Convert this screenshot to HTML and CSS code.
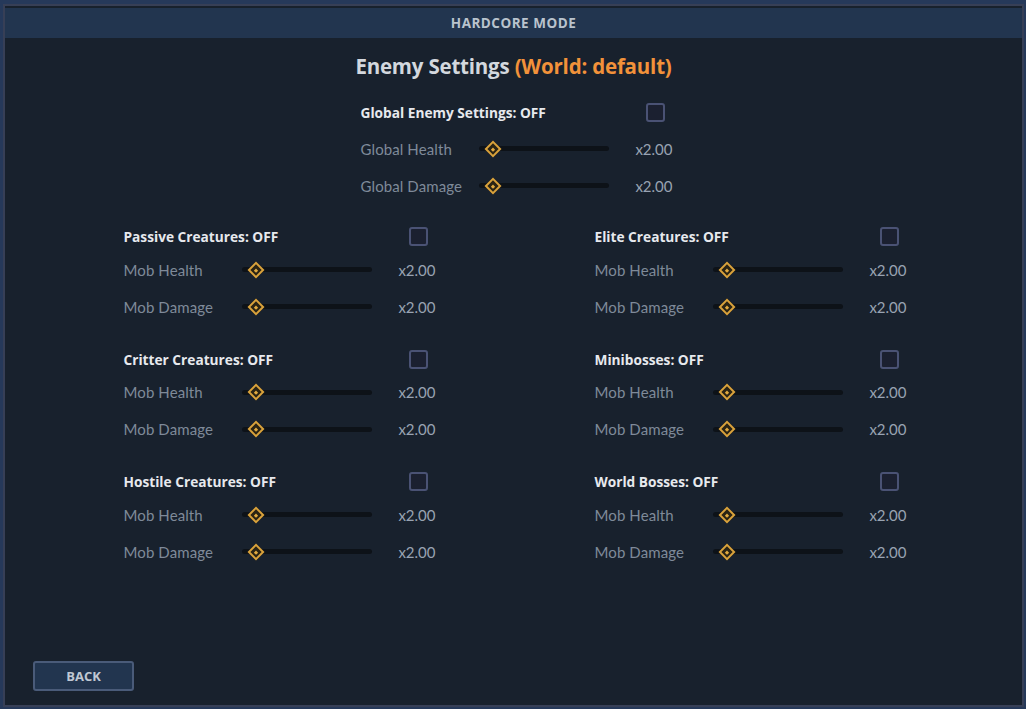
FILE: index.html
```html
<!DOCTYPE html>
<html lang="en">
<head>
    <meta charset="UTF-8">
    <meta name="viewport" content="width=device-width, initial-scale=1.0">
    <title>Hardcore Mode</title>
    <link rel="stylesheet" href="styles.css">
</head>
<body>
    <div class="frame">
        <div class="topbar">HARDCORE MODE</div>
        <div class="content">
            <h1 class="title">Enemy Settings <span class="world">(World: default)</span></h1>

            <div class="group global">
                <div class="group-head">
                    <span class="group-name">Global Enemy Settings: OFF</span>
                    <span class="check"></span>
                </div>
                <div class="row">
                    <span class="row-name">Global Health</span>
                    <span class="slider"><span class="knob"></span></span>
                    <span class="row-value">x2.00</span>
                </div>
                <div class="row">
                    <span class="row-name">Global Damage</span>
                    <span class="slider"><span class="knob"></span></span>
                    <span class="row-value">x2.00</span>
                </div>
            </div>

            <div class="columns">
                <div class="group">
                    <div class="group-head">
                        <span class="group-name">Passive Creatures: OFF</span>
                        <span class="check"></span>
                    </div>
                    <div class="row">
                        <span class="row-name">Mob Health</span>
                        <span class="slider"><span class="knob"></span></span>
                        <span class="row-value">x2.00</span>
                    </div>
                    <div class="row">
                        <span class="row-name">Mob Damage</span>
                        <span class="slider"><span class="knob"></span></span>
                        <span class="row-value">x2.00</span>
                    </div>
                </div>
                <div class="group">
                    <div class="group-head">
                        <span class="group-name">Elite Creatures: OFF</span>
                        <span class="check"></span>
                    </div>
                    <div class="row">
                        <span class="row-name">Mob Health</span>
                        <span class="slider"><span class="knob"></span></span>
                        <span class="row-value">x2.00</span>
                    </div>
                    <div class="row">
                        <span class="row-name">Mob Damage</span>
                        <span class="slider"><span class="knob"></span></span>
                        <span class="row-value">x2.00</span>
                    </div>
                </div>
                <div class="group">
                    <div class="group-head">
                        <span class="group-name">Critter Creatures: OFF</span>
                        <span class="check"></span>
                    </div>
                    <div class="row">
                        <span class="row-name">Mob Health</span>
                        <span class="slider"><span class="knob"></span></span>
                        <span class="row-value">x2.00</span>
                    </div>
                    <div class="row">
                        <span class="row-name">Mob Damage</span>
                        <span class="slider"><span class="knob"></span></span>
                        <span class="row-value">x2.00</span>
                    </div>
                </div>
                <div class="group">
                    <div class="group-head">
                        <span class="group-name">Minibosses: OFF</span>
                        <span class="check"></span>
                    </div>
                    <div class="row">
                        <span class="row-name">Mob Health</span>
                        <span class="slider"><span class="knob"></span></span>
                        <span class="row-value">x2.00</span>
                    </div>
                    <div class="row">
                        <span class="row-name">Mob Damage</span>
                        <span class="slider"><span class="knob"></span></span>
                        <span class="row-value">x2.00</span>
                    </div>
                </div>
                <div class="group">
                    <div class="group-head">
                        <span class="group-name">Hostile Creatures: OFF</span>
                        <span class="check"></span>
                    </div>
                    <div class="row">
                        <span class="row-name">Mob Health</span>
                        <span class="slider"><span class="knob"></span></span>
                        <span class="row-value">x2.00</span>
                    </div>
                    <div class="row">
                        <span class="row-name">Mob Damage</span>
                        <span class="slider"><span class="knob"></span></span>
                        <span class="row-value">x2.00</span>
                    </div>
                </div>
                <div class="group">
                    <div class="group-head">
                        <span class="group-name">World Bosses: OFF</span>
                        <span class="check"></span>
                    </div>
                    <div class="row">
                        <span class="row-name">Mob Health</span>
                        <span class="slider"><span class="knob"></span></span>
                        <span class="row-value">x2.00</span>
                    </div>
                    <div class="row">
                        <span class="row-name">Mob Damage</span>
                        <span class="slider"><span class="knob"></span></span>
                        <span class="row-value">x2.00</span>
                    </div>
                </div>
            </div>

            <div class="footer">
                <button class="back-btn">BACK</button>
            </div>
        </div>
    </div>
</body>
</html>
```

FILE: styles.css
```css
html, body {
    height: 100%;
}
body {
    margin: 0;
    padding: 4px 2px 2px 3px;
    box-sizing: border-box;
    background-color: #26395a;
    font-family: Lato, "Noto Sans", sans-serif;
    overflow: hidden;
}
.frame {
    height: 100%;
    box-sizing: border-box;
    border: 2px solid #373f56;
    padding-top: 2px;
    background: #18212d;
    display: flex;
    flex-direction: column;
}
.topbar {
    height: 30px;
    line-height: 30px;
    background: #22354f;
    color: #b9c3cd;
    font-family: "Open Sans", sans-serif;
    font-size: 13.5px;
    font-weight: bold;
    letter-spacing: 0.5px;
    text-align: center;
}
.content {
    flex: 1;
    display: flex;
    flex-direction: column;
    align-items: center;
    padding-top: 13px;
}
.title {
    margin: 0;
    height: 30px;
    line-height: 30px;
    font-family: "Open Sans", sans-serif;
    font-size: 20.5px;
    font-weight: bold;
    letter-spacing: -0.2px;
    color: #d3d8de;
}
.world {
    color: #f2923a;
}
.group {
    width: 312px;
}
.global {
    margin-top: 14px;
    margin-left: 6px;
}
.global .group-head {
    height: 35px;
}
.group-head {
    height: 29px;
    display: flex;
    align-items: center;
    justify-content: space-between;
    padding-right: 8px;
}
.group-name {
    font-family: "Open Sans", sans-serif;
    font-size: 13.7px;
    font-weight: bold;
    color: #e7e9ed;
}
.check {
    width: 15px;
    height: 15px;
    border: 2px solid #4a5274;
    border-radius: 3px;
    background: #1b2030;
}
.row {
    height: 37px;
    display: grid;
    grid-template-columns: 118px 130px 1fr;
    align-items: center;
}
.row-name {
    font-size: 15px;
    letter-spacing: 0.1px;
    color: #7f8a99;
}
.row-value {
    font-size: 15px;
    color: #98a3b2;
    text-align: right;
}
.slider {
    position: relative;
    height: 5px;
    border-radius: 3px;
    background: #0d1218;
}
/* diamond handle sitting on the track */
.knob {
    position: absolute;
    left: 8px;
    top: -3.5px;
    width: 8px;
    height: 8px;
    border: 2px solid #d9a23c;
    background: #2a2414;
    transform: rotate(45deg);
}
.knob::after {
    content: "";
    position: absolute;
    left: 2.5px;
    top: 2.5px;
    width: 3px;
    height: 3px;
    background: #e2aa40;
}
.columns {
    margin-top: 18px;
    margin-left: 3px;
    display: grid;
    grid-template-columns: 312px 312px;
    column-gap: 159px;
    row-gap: 19.5px;
}
.footer {
    margin-top: auto;
    align-self: stretch;
    padding: 0 0 14px 28px;
}
.back-btn {
    width: 101px;
    height: 30px;
    border: 2px solid #4a5b79;
    border-radius: 3px;
    background: #22354f;
    color: #c0c8d3;
    font-family: "Open Sans", sans-serif;
    font-size: 13px;
    font-weight: bold;
    padding-bottom: 2px;
}
```
